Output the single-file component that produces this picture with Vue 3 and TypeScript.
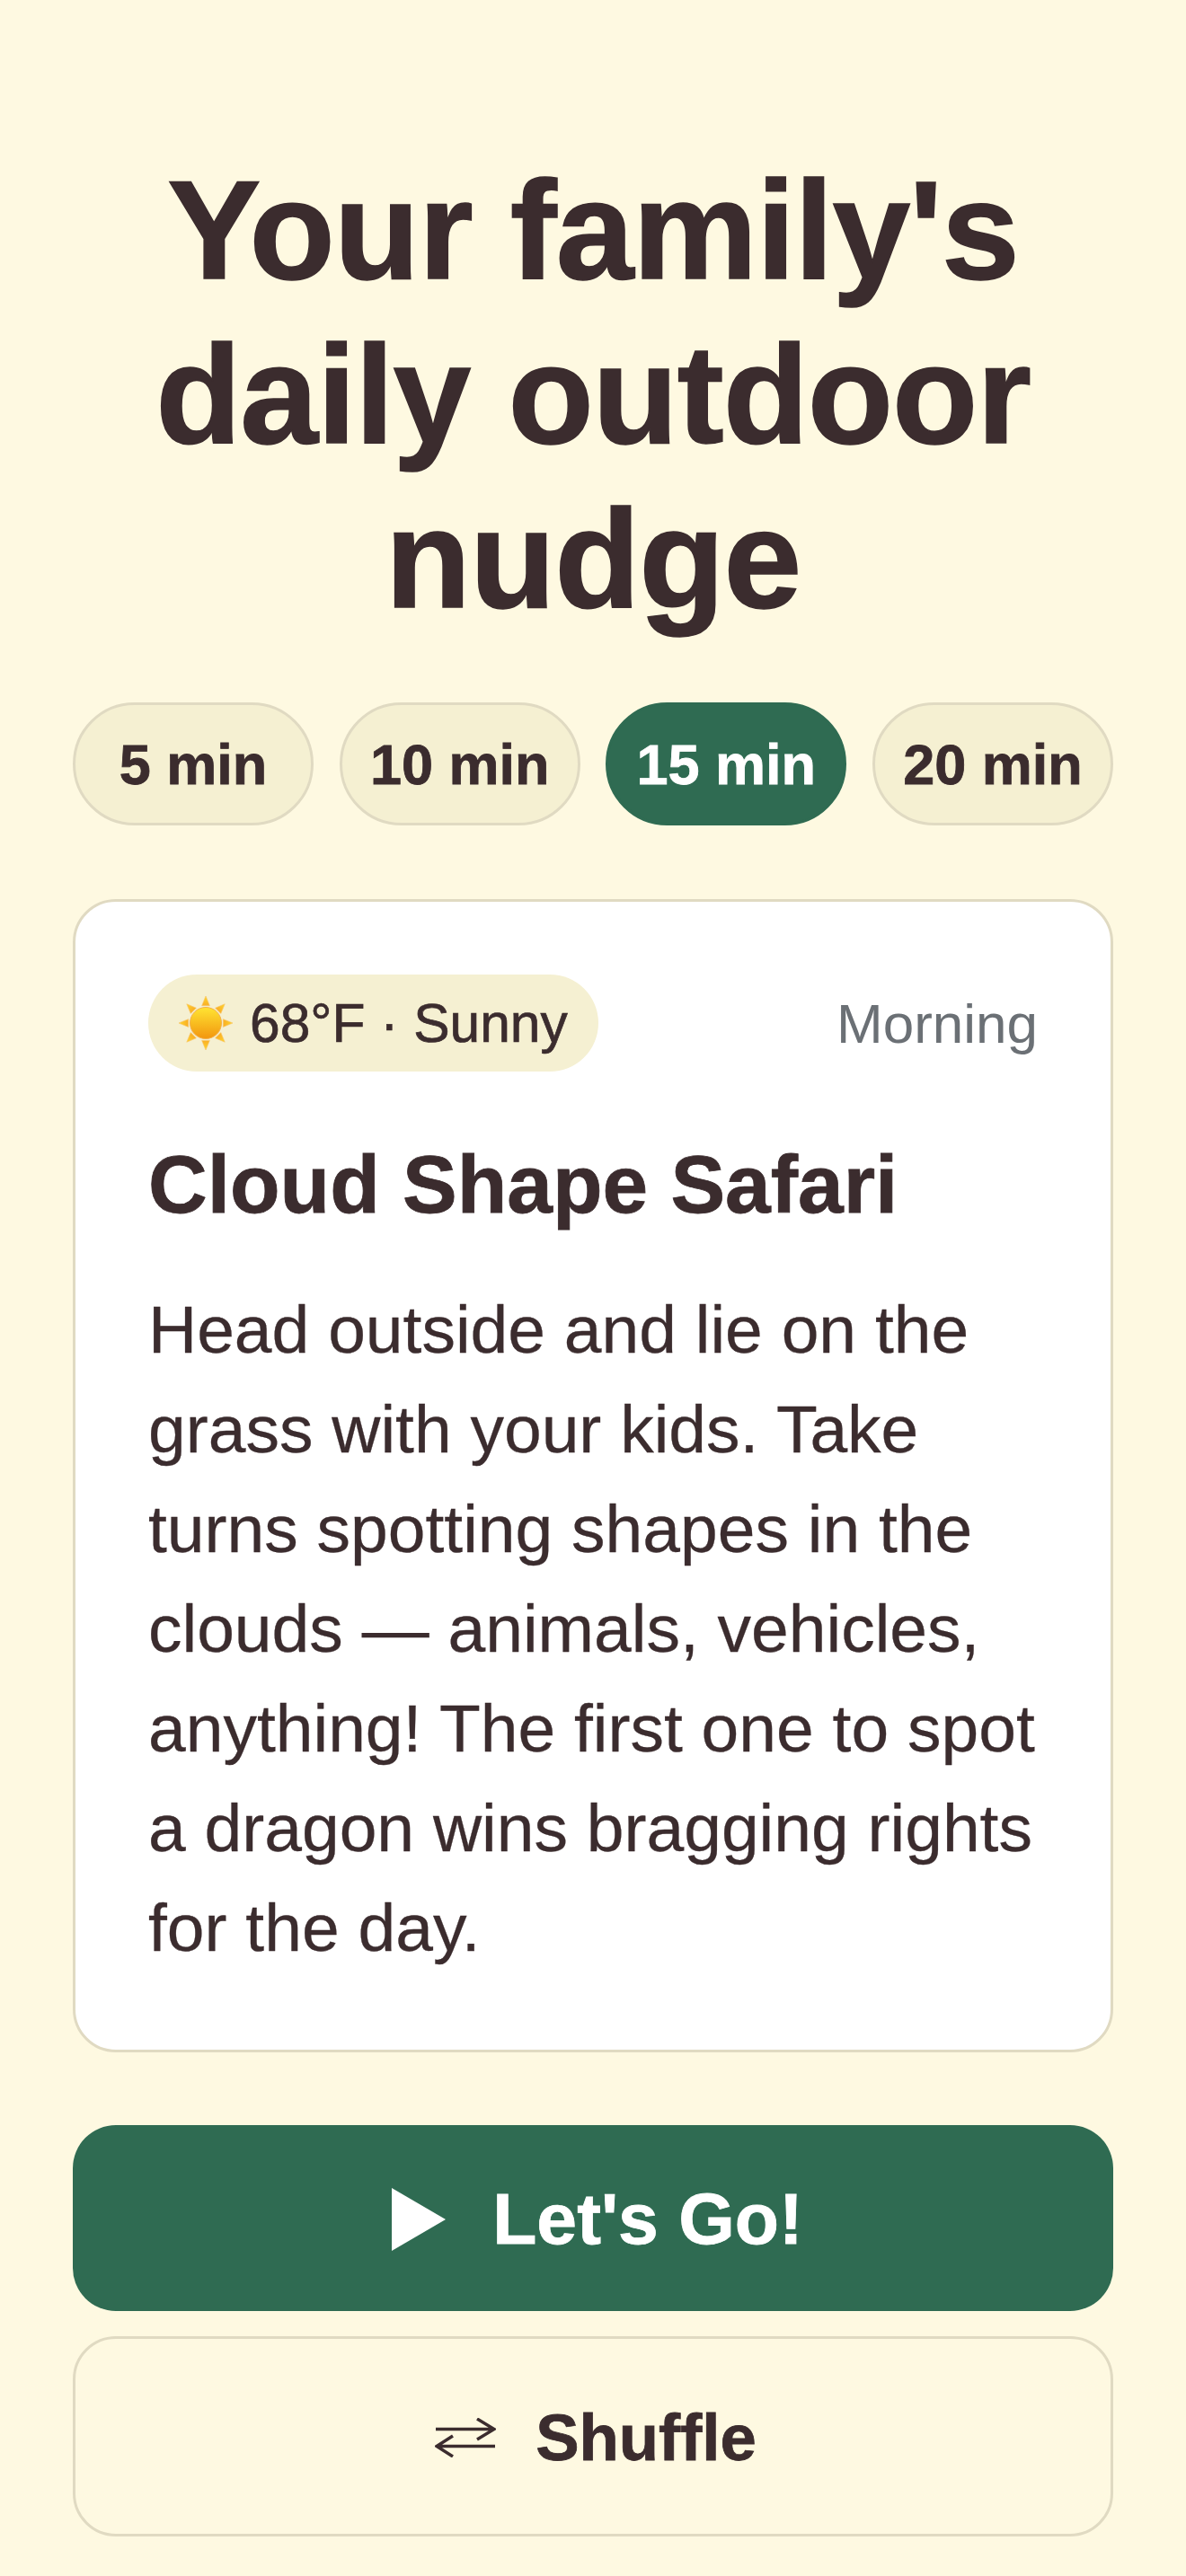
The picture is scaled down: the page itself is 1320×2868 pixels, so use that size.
<template>
  <main class="page">
    <h1 class="headline">Your family's daily outdoor nudge</h1>

    <div class="durations">
      <button
        v-for="d in durations"
        :key="d"
        class="pill"
        :class="{ active: d === selected }"
        @click="selected = d"
      >
        {{ d }} min
      </button>
    </div>

    <section class="card">
      <div class="card-top">
        <span class="weather">
          <svg class="sun" viewBox="0 0 48 48" aria-hidden="true">
            <defs>
              <linearGradient id="sunFill" x1="0" y1="0" x2="0" y2="1">
                <stop offset="0" stop-color="#ffe433" />
                <stop offset="1" stop-color="#f2960e" />
              </linearGradient>
              <linearGradient id="rayFill" x1="0" y1="0" x2="0" y2="1">
                <stop offset="0" stop-color="#ffd62b" />
                <stop offset="1" stop-color="#f9ae26" />
              </linearGradient>
            </defs>
            <g fill="url(#rayFill)" stroke="#f9c56a" stroke-width="0.5">
              <polygon v-for="a in rays" :key="a" points="24,0 20.500,8.500 27.500,8.500" :transform="`rotate(${a} 24 24)`" />
            </g>
            <circle cx="24" cy="24" r="14" fill="url(#sunFill)" stroke="#f4b04a" stroke-width="0.8" />
          </svg>
          <span>68°F · Sunny</span>
        </span>
        <span class="time">Morning</span>
      </div>
      <h2 class="title">Cloud Shape Safari</h2>
      <p class="body">
        Head outside and lie on the grass with your kids. Take turns spotting shapes in the clouds — animals, vehicles, anything! The first one to spot a dragon wins bragging rights for the day.
      </p>
    </section>

    <button class="go">
      <svg class="play" viewBox="0 0 60 70" aria-hidden="true"><polygon points="0,0 60,35 0,70" /></svg>
      <span>Let's Go!</span>
    </button>
    <button class="shuffle">
      <svg class="swap" viewBox="0 0 68 44" aria-hidden="true">
        <path d="M1 12.500H66M47 1l19 11.500-19 11.500M67 31.500H2M20 20L2 31.500l18 11.500" />
      </svg>
      <span>Shuffle</span>
    </button>
  </main>
</template>

<script setup lang="ts">
import { ref } from 'vue'

const durations = [5, 10, 15, 20]
const selected = ref(15)
const rays = [0, 45, 90, 135, 180, 225, 270, 315]
</script>

<style>
body {
  background: #fef9e1;
}
</style>

<style scoped>
.page {
  box-sizing: border-box;
  width: 1320px;
  height: 2868px;
  padding: 0 81px;
  background: #fef9e1;
  color: #3b2c2e;
  font-family: "Liberation Sans", Arial, sans-serif;
  display: flex;
  flex-direction: column;
}

.headline {
  margin: 165px 0 0;
  font-size: 156px;
  line-height: 183px;
  font-weight: 700;
  letter-spacing: -1.1px;
  text-align: center;
  -webkit-text-stroke: 1.5px currentColor;
}

.durations {
  display: grid;
  grid-template-columns: repeat(4, 1fr);
  gap: 28.5px;
  margin-top: 68px;
}

.pill {
  height: 137px;
  padding: 0;
  border: 3px solid #e0dac2;
  border-radius: 69px;
  background: #f5f0d2;
  color: inherit;
  font: 700 63px "Liberation Sans", Arial, sans-serif;
  -webkit-text-stroke: 0.8px currentColor;
}

.pill.active {
  background: #2f6b52;
  border-color: #2f6b52;
  color: #fff;
}

.card {
  margin-top: 82px;
  padding: 81px 81px 80px;
  background: #fff;
  border: 3px solid #e0dac2;
  border-radius: 48px;
}

.card-top {
  display: flex;
  align-items: center;
  justify-content: space-between;
}

.weather {
  display: flex;
  align-items: center;
  gap: 19px;
  height: 108px;
  padding: 0 34px;
  border-radius: 54px;
  background: #f5f0d2;
  font-size: 60.5px;
  -webkit-text-stroke: 0.7px currentColor;
}

.sun {
  width: 60px;
  height: 60px;
}

.time {
  font-size: 62px;
  color: #6b7075;
}

.title {
  margin: 72px 0 0;
  font-size: 91px;
  line-height: 108px;
  font-weight: 700;
  -webkit-text-stroke: 0.8px currentColor;
}

.body {
  margin: 52px 0 0;
  font-size: 75px;
  line-height: 111px;
  -webkit-text-stroke: 0.3px currentColor;
}

.go,
.shuffle {
  display: flex;
  align-items: center;
  justify-content: center;
  width: 100%;
  font-family: inherit;
  font-weight: 700;
  -webkit-text-stroke: 0.8px currentColor;
}

.go {
  height: 207px;
  margin-top: 81px;
  padding: 2px 0 0 10px;
  gap: 52px;
  border: 0;
  border-radius: 48px;
  background: #2f6b52;
  color: #fff;
  font-size: 80.5px;
}

.play {
  width: 60px;
  height: 70px;
  fill: #fff;
}

.shuffle {
  height: 223px;
  margin-top: 28px;
  padding: 2px 0 0 6px;
  gap: 44px;
  border: 3px solid #e0dac2;
  border-radius: 48px;
  background: transparent;
  color: inherit;
  font-size: 72.5px;
}

.swap {
  width: 68px;
  height: 44px;
  fill: none;
  stroke: #3b2c2e;
  stroke-width: 3.5;
}
</style>
